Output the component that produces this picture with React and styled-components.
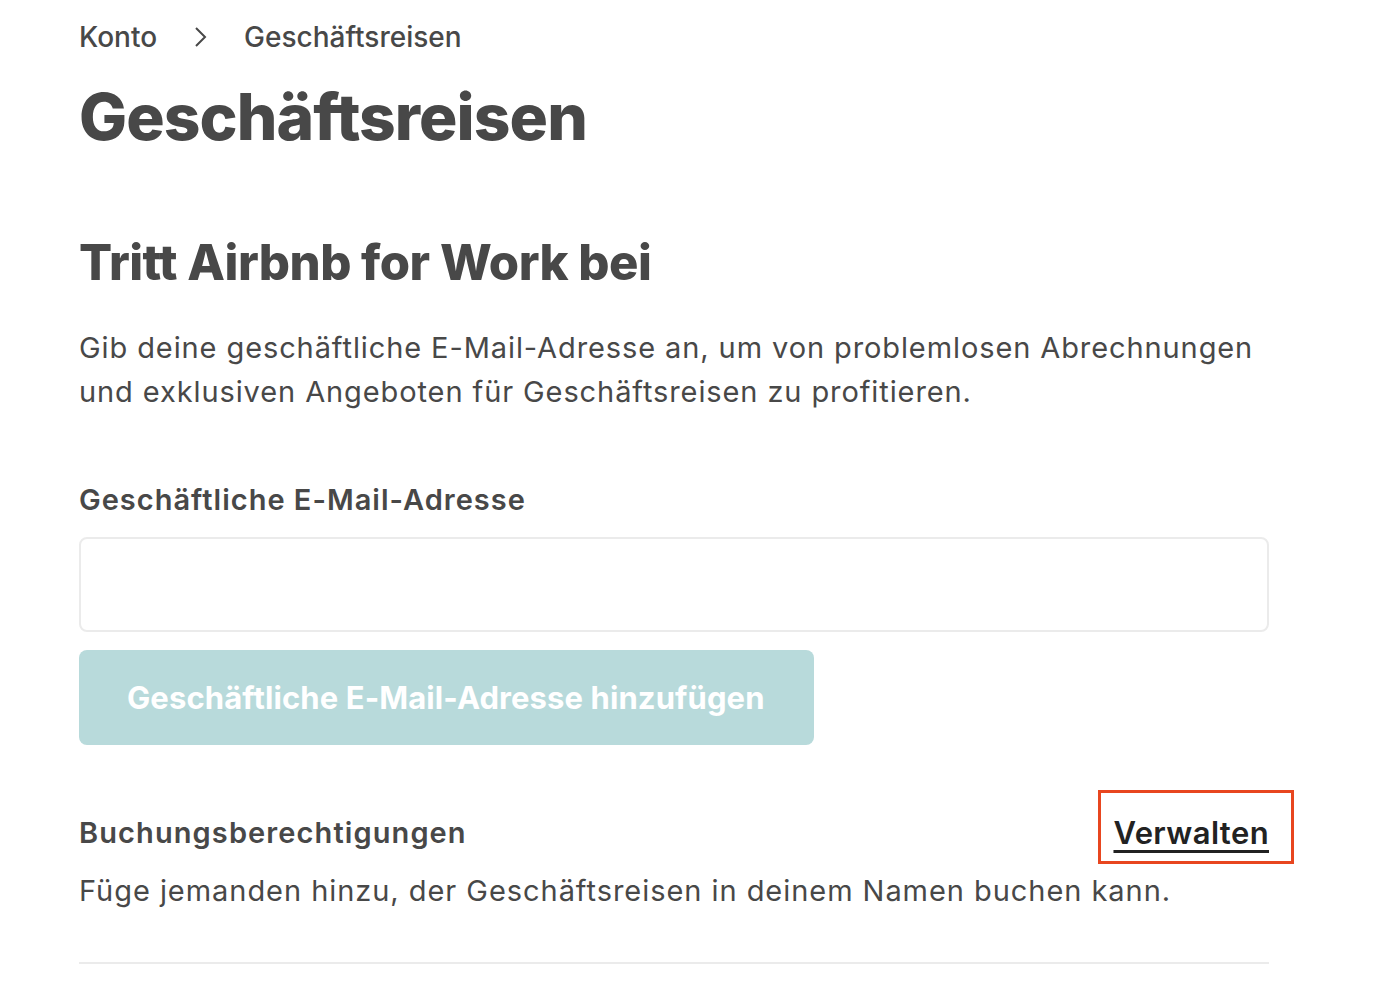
import React from "react";
import styled, { createGlobalStyle } from "styled-components";

const Global = createGlobalStyle`
  html, body { margin: 0; padding: 0; background: #fff; }
  body { font-family: "Inter", "Noto Sans", sans-serif; color: #484848; -webkit-font-smoothing: antialiased; }
`;

const Page = styled.main`
  width: 1190px;
  padding: 0 0 0 79px;
  display: flex;
  flex-direction: column;
`;

const Breadcrumb = styled.nav`
  display: flex;
  align-items: center;
  height: 74px;
  font-size: 28px;
  font-weight: 500;
  color: #484848;
`;

const Crumb = styled.span`
  letter-spacing: 0;
`;

const Chevron = styled.svg`
  width: 16px;
  height: 24px;
  margin: 0 35px 0 36px;
`;

const Title = styled.h1`
  margin: 0;
  font-size: 64px;
  font-weight: 800;
  line-height: 86px;
  letter-spacing: -0.9px;
  color: #484848;
`;

const SectionTitle = styled.h2`
  margin: 73px 0 0;
  font-size: 49px;
  font-weight: 800;
  line-height: 60px;
  letter-spacing: -0.5px;
  color: #484848;
`;

const Lead = styled.p`
  margin: 33px 0 0;
  font-size: 29px;
  font-weight: 400;
  line-height: 44px;
  letter-spacing: 0.9px;
  color: #484848;
`;

const Label = styled.label`
  display: block;
  margin: 66px 0 0;
  font-size: 29px;
  font-weight: 600;
  line-height: 40px;
  letter-spacing: 1px;
  color: #484848;
`;

const Input = styled.input`
  box-sizing: border-box;
  margin-top: 17px;
  width: 1190px;
  height: 95px;
  border: 2px solid #ebebeb;
  border-radius: 8px;
  background: #fff;
  font: inherit;
  font-size: 28px;
  padding: 0 24px;
  outline: none;
`;

const PrimaryButton = styled.button`
  box-sizing: border-box;
  margin-top: 18px;
  align-self: flex-start;
  height: 95px;
  width: 735px;
  padding: 0 48px;
  border: none;
  border-radius: 8px;
  background: #b8dadb;
  color: #fff;
  font-family: inherit;
  font-size: 31px;
  font-weight: 700;
  letter-spacing: 0.1px;
  text-align: left;
  cursor: default;
`;

const SettingRow = styled.div`
  margin-top: 65px;
  display: flex;
  justify-content: space-between;
  align-items: center;
  height: 44px;
`;

const SettingTitle = styled.span`
  font-size: 29px;
  font-weight: 600;
  letter-spacing: 1.1px;
  color: #484848;
`;

const ManageLink = styled.a`
  position: relative;
  font-size: 31px;
  font-weight: 600;
  letter-spacing: 0.4px;
  color: #222;
  text-decoration: underline;
  text-decoration-thickness: 3px;
  text-underline-offset: 6px;
  &::after {
    content: "";
    position: absolute;
    left: -15px;
    right: -25px;
    top: -24px;
    bottom: -13px;
    border: 3px solid #e8461f;
  }
`;

const SettingDesc = styled.p`
  margin: 17px 0 0;
  font-size: 29px;
  line-height: 40px;
  letter-spacing: 0.95px;
  color: #484848;
`;

const Divider = styled.hr`
  margin: 51px 0 0;
  border: none;
  border-top: 2px solid #ebebeb;
  width: 1190px;
`;

export default function App() {
  return (
    <>
      <Global />
      <Page>
        <Breadcrumb>
          <Crumb>Konto</Crumb>
          <Chevron viewBox="0 0 16 24" aria-hidden="true">
            <path d="M3 3l9 9-9 9" fill="none" stroke="#484848" strokeWidth="2" />
          </Chevron>
          <Crumb>Geschäftsreisen</Crumb>
        </Breadcrumb>
        <Title>Geschäftsreisen</Title>
        <SectionTitle>Tritt Airbnb for Work bei</SectionTitle>
        <Lead>
          Gib deine geschäftliche E-Mail-Adresse an, um von problemlosen Abrechnungen
          <br />
          und exklusiven Angeboten für Geschäftsreisen zu profitieren.
        </Lead>
        <Label htmlFor="bizmail">Geschäftliche E-Mail-Adresse</Label>
        <Input id="bizmail" type="email" />
        <PrimaryButton disabled>Geschäftliche E-Mail-Adresse hinzufügen</PrimaryButton>
        <SettingRow>
          <SettingTitle>Buchungsberechtigungen</SettingTitle>
          <ManageLink href="#">Verwalten</ManageLink>
        </SettingRow>
        <SettingDesc>Füge jemanden hinzu, der Geschäftsreisen in deinem Namen buchen kann.</SettingDesc>
        <Divider />
      </Page>
    </>
  );
}
